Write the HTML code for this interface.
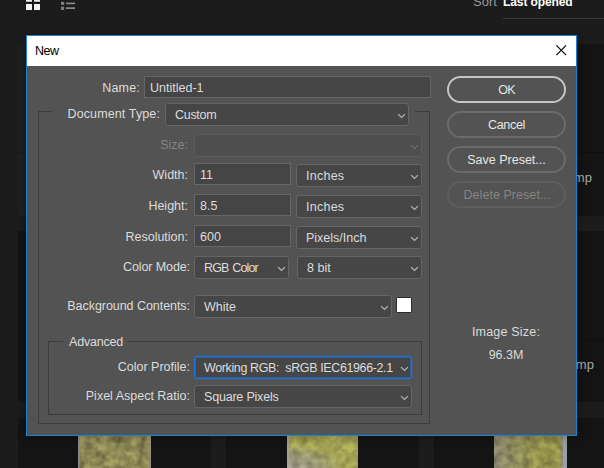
<!DOCTYPE html>
<html lang="en">
<head>
<meta charset="utf-8">
<title>New</title>
<style>
*{box-sizing:border-box;margin:0;padding:0}
html,body{width:604px;height:468px;overflow:hidden;background:#1c1c1c}
body{position:relative;font-family:"Liberation Sans",Arial,sans-serif;font-size:12.5px;color:#dcdcdc;line-height:16px}
.abs{position:absolute}
/* background app */
.card{position:absolute;background:#141414}
.card i{position:absolute;left:0;width:100%;height:1px;background:#0f0f0f}
.info{position:absolute;background:#181818}
.thumb{position:absolute;overflow:hidden}
/* dialog */
#dlg{position:absolute;left:26px;top:35px;width:551px;height:401px;border:1px solid #1883d7;background:#535353;box-shadow:0 1px 9px 1px rgba(0,0,0,.24)}
#title{position:absolute;left:0;top:0;width:549px;height:30px;background:#fff;color:#000}
#title span{position:absolute;left:8px;top:7px;font-size:12.5px;letter-spacing:-0.5px}
.lbl{position:absolute;text-align:right;white-space:nowrap;height:16px}
.inp{position:absolute;background:#454545;border:1px solid #666;height:22px;padding:3px 0 0 5px;white-space:nowrap}
.sel{position:absolute;background:#464646;border:1px solid #656565;border-radius:3px;height:23px;padding:3px 0 0 9px;white-space:nowrap}
.sel svg{position:absolute;right:2px;top:9px}
.sel.dis{background:#4e4e4e;border-color:#5d5d5d}
.btn{position:absolute;left:421px;width:119px;height:27px;border:2px solid #6b6b6b;border-radius:14px;text-align:center;padding-top:4px;font-size:12.5px;color:#e6e6e6}
.fs{position:absolute;border:1px solid #3d3d3d}
.fs b{position:absolute;font-weight:normal;background:#535353;white-space:nowrap}
</style>
</head>
<body>
<!-- background: Photoshop start workspace -->
<!-- grid / list view icons -->
<svg class="abs" style="left:26px;top:0" width="50" height="11" viewBox="0 0 50 11">
  <rect x="0" y="0" width="6" height="1.7" fill="#f4f4f4"/><rect x="8" y="0" width="6" height="1.7" fill="#f4f4f4"/>
  <rect x="0" y="4" width="6" height="6" fill="#f4f4f4"/><rect x="8" y="4" width="6" height="6" fill="#f4f4f4"/>
  <g fill="#808080"><rect x="35" y="1.9" width="3.2" height="2.9"/><rect x="35" y="6.7" width="3.2" height="3.2"/></g>
  <g fill="#8c8c8c"><rect x="40" y="2.6" width="9" height="1.6"/><rect x="40" y="7.3" width="9" height="1.7"/></g>
</svg>
<div class="abs" id="sort" style="left:473px;top:-6px;font-size:13px;color:#9a9a9a">Sort</div>
<div class="abs" id="lastop" style="left:503px;top:-6px;font-size:12px;letter-spacing:-0.1px;color:#fff;font-weight:bold;white-space:nowrap">Last opened</div>
<div class="abs" style="left:503px;top:18px;width:101px;height:1px;background:#3a3a3a"></div>

<!-- cards row 1 -->
<div class="card" style="left:18px;top:44px;width:193px;height:172px;background:#202020;border-radius:4px"><i style="top:108px;background:#1a1a1a"></i></div>
<div class="card" style="left:226px;top:44px;width:193px;height:172px"><i style="top:108px"></i></div>
<div class="card" style="left:434px;top:44px;width:193px;height:172px"><i style="top:108px"></i></div>
<!-- cards row 2 -->
<div class="card" style="left:18px;top:231px;width:193px;height:171px"><i style="top:108px"></i></div>
<div class="card" style="left:226px;top:231px;width:193px;height:171px"><i style="top:108px"></i></div>
<div class="card" style="left:434px;top:231px;width:193px;height:171px"><i style="top:108px"></i></div>
<!-- cards row 3 -->
<div class="card" style="left:18px;top:418px;width:193px;height:60px"></div>
<div class="card" style="left:226px;top:418px;width:193px;height:60px"></div>
<div class="card" style="left:434px;top:418px;width:193px;height:60px"></div>
<!-- file names peeking out -->
<div class="abs" id="mp1" style="left:563px;top:170px;font-size:13px;color:#a9a9a9;white-space:nowrap">.bmp</div>
<div class="abs" id="mp2" style="left:565px;top:357px;font-size:13px;color:#a9a9a9;white-space:nowrap">.bmp</div>
<!-- thumbnails row 3 -->
<svg class="abs" style="left:0;top:436px" width="604" height="32" viewBox="0 0 604 32">
  <defs>
    <filter id="nz" x="0" y="0" width="100%" height="100%">
      <feTurbulence type="fractalNoise" baseFrequency="0.13" numOctaves="2" seed="4" result="t"/>
      <feColorMatrix in="t" type="matrix" values="0 0 0 0 0  0 0 0 0 0  0 0 0 0 0  0.45 0.45 0 0 -0.3"/>
      <feComposite in2="SourceGraphic" operator="in"/>
    </filter>
    <radialGradient id="g2" cx="0.05" cy="1" r="0.75" gradientTransform="scale(1 1)"><stop offset="0" stop-color="#b0ad9a"/><stop offset=".45" stop-color="#aeab88"/><stop offset="1" stop-color="#b7b65f"/></radialGradient>
    <linearGradient id="g3" x1="0" y1="0" x2="1" y2="0"><stop offset="0" stop-color="#9c987c"/><stop offset=".3" stop-color="#a29e69"/><stop offset=".55" stop-color="#a9a65a"/><stop offset=".91" stop-color="#aaa756"/><stop offset=".94" stop-color="#9d9da4"/><stop offset="1" stop-color="#9d9da4"/></linearGradient>
  </defs>
  <rect x="78" y="0" width="73" height="32" fill="#a6a064"/>
  <rect x="78" y="0" width="73" height="32" fill="#777138" filter="url(#nz)"/>
  <rect x="78" y="0" width="1.5" height="32" fill="#8f8b84"/><rect x="150" y="0" width="1" height="32" fill="#8f8b84"/>
  <rect x="287" y="0" width="71" height="32" fill="url(#g2)"/>
  <rect x="287" y="0" width="71" height="32" fill="#8f8c50" filter="url(#nz)" opacity=".7"/><rect x="287" y="0" width="2" height="32" fill="#a7a493" opacity=".8"/>
  <rect x="494" y="0" width="73" height="32" fill="url(#g3)"/>
  <rect x="494" y="0" width="69" height="32" fill="#7d7a44" filter="url(#nz)" opacity=".8"/>
</svg>

<!-- dialog -->
<div id="dlg">
  <div id="title"><span id="ttxt">New</span>
    <svg class="abs" style="left:529px;top:9px" width="11" height="11" viewBox="0 0 11 11"><path d="M0.4 0.4L10.1 10.1M10.1 0.4L0.4 10.1" stroke="#000" stroke-width="1.15" fill="none"/></svg>
  </div>
</div>

<!-- dialog contents (page coordinates) -->
<div id="form" class="abs" style="left:0;top:0;width:604px;height:468px">
  <!-- fieldsets -->
  <div class="fs" style="left:38px;top:111px;width:392px;height:313px"><b style="left:13px;top:-8px;width:363px;height:16px"></b></div>
  <div class="fs" style="left:48px;top:341px;width:374px;height:74px"><b id="adv" style="left:14px;top:-8px;letter-spacing:-0.2px;padding:0 5px 0 6px;height:18px">Advanced</b></div>

  <div class="lbl" id="l_name" style="left:40px;width:100px;top:80px;letter-spacing:0.2px">Name:</div>
  <div class="inp" id="i_name" style="left:144px;top:76px;width:287px">Untitled-1</div>

  <div class="lbl" id="l_doc" style="left:40px;width:120px;top:106px;letter-spacing:0.12px">Document Type:</div>
  <div class="sel" id="s_doc" style="left:165px;top:103px;width:244px;letter-spacing:-0.3px;padding-top:3px">Custom<svg width="9" height="6" viewBox="0 0 9 6"><path d="M1.1 1.1L4.5 4.5L7.9 1.1" stroke="#b8b8b8" stroke-width="1.2" fill="none"/></svg></div>

  <div class="lbl" id="l_size" style="left:88px;width:100px;top:137px;color:#858585">Size:</div>
  <div class="sel dis" id="s_size" style="left:194px;top:134px;width:228px"><svg width="9" height="6" viewBox="0 0 9 6"><path d="M1.1 1.1L4.5 4.5L7.9 1.1" stroke="#6a6a6a" stroke-width="1.25" fill="none"/></svg></div>

  <div class="lbl" id="l_w" style="left:88px;width:100px;top:167px">Width:</div>
  <div class="inp" id="i_w" style="left:194px;top:163px;width:97px">11</div>
  <div class="sel" id="s_w" style="left:296px;top:164px;width:126px;letter-spacing:0.25px;padding-left:9px">Inches<svg width="9" height="6" viewBox="0 0 9 6"><path d="M1.1 1.1L4.5 4.5L7.9 1.1" stroke="#b8b8b8" stroke-width="1.2" fill="none"/></svg></div>

  <div class="lbl" id="l_h" style="left:88px;width:100px;top:198px">Height:</div>
  <div class="inp" id="i_h" style="left:194px;top:194px;width:97px">8.5</div>
  <div class="sel" id="s_h" style="left:296px;top:195px;width:126px;letter-spacing:0.25px;padding-left:9px">Inches<svg width="9" height="6" viewBox="0 0 9 6"><path d="M1.1 1.1L4.5 4.5L7.9 1.1" stroke="#b8b8b8" stroke-width="1.2" fill="none"/></svg></div>

  <div class="lbl" id="l_r" style="left:88px;width:100px;top:229px">Resolution:</div>
  <div class="inp" id="i_r" style="left:194px;top:225px;width:97px">600</div>
  <div class="sel" id="s_r" style="left:296px;top:226px;width:126px">Pixels/Inch<svg width="9" height="6" viewBox="0 0 9 6"><path d="M1.1 1.1L4.5 4.5L7.9 1.1" stroke="#b8b8b8" stroke-width="1.2" fill="none"/></svg></div>

  <div class="lbl" id="l_cm" style="letter-spacing:-0.1px;left:88px;width:102px;top:259px">Color Mode:</div>
  <div class="sel" id="s_cm" style="left:194px;top:256px;width:95px;letter-spacing:-0.9px;word-spacing:1.4px">RGB Color<svg width="9" height="6" viewBox="0 0 9 6"><path d="M1.1 1.1L4.5 4.5L7.9 1.1" stroke="#b8b8b8" stroke-width="1.2" fill="none"/></svg></div>
  <div class="sel" id="s_bit" style="left:297px;top:256px;width:125px;padding-left:9px">8 bit<svg width="9" height="6" viewBox="0 0 9 6"><path d="M1.1 1.1L4.5 4.5L7.9 1.1" stroke="#b8b8b8" stroke-width="1.2" fill="none"/></svg></div>

  <div class="lbl" id="l_bg" style="letter-spacing:-0.05px;left:60px;width:130px;top:298px">Background Contents:</div>
  <div class="sel" id="s_bg" style="left:194px;top:295px;width:198px">White<svg width="9" height="6" viewBox="0 0 9 6"><path d="M1.1 1.1L4.5 4.5L7.9 1.1" stroke="#b8b8b8" stroke-width="1.2" fill="none"/></svg></div>
  <div class="abs" id="sw" style="left:396px;top:297px;width:16px;height:16px;background:#fff;border:1px solid #2c2c2c;border-radius:1px"></div>

  <div class="lbl" id="l_cp" style="left:60px;width:130px;top:359px">Color Profile:</div>
  <div class="sel" id="s_cp" style="left:194px;top:356px;width:218px;height:23px;border:1px solid #1e72dc;box-shadow:inset 0 0 0 1px rgba(30,114,220,.55),0 0 0 1px rgba(30,114,220,.18);padding:3px 0 0 9px;white-space:pre;letter-spacing:-0.38px">Working RGB:  sRGB IEC61966-2.1<svg style="right:2px;top:9px" width="9" height="6" viewBox="0 0 9 6"><path d="M1.1 1.1L4.5 4.5L7.9 1.1" stroke="#b8b8b8" stroke-width="1.2" fill="none"/></svg></div>

  <div class="lbl" id="l_par" style="left:60px;width:130px;top:388px">Pixel Aspect Ratio:</div>
  <div class="sel" id="s_par" style="left:194px;top:385px;width:218px;letter-spacing:-0.2px">Square Pixels<svg width="9" height="6" viewBox="0 0 9 6"><path d="M1.1 1.1L4.5 4.5L7.9 1.1" stroke="#b8b8b8" stroke-width="1.2" fill="none"/></svg></div>

  <!-- buttons -->
  <div class="btn" id="b_ok" style="letter-spacing:-0.8px;left:447px;top:76px;border:2px solid #c6c6c6">OK</div>
  <div class="btn" id="b_ca" style="letter-spacing:-0.3px;left:447px;top:111px">Cancel</div>
  <div class="btn" id="b_sp" style="left:447px;top:146px">Save Preset...</div>
  <div class="btn" id="b_dp" style="letter-spacing:0.05px;padding-left:1px;left:447px;top:181px;color:#858585;border-color:#5d5d5d">Delete Preset...</div>

  <div class="abs" id="is1" style="left:446px;width:120px;top:324px;text-align:center;letter-spacing:0.2px">Image Size:</div>
  <div class="abs" id="is2" style="left:446px;width:120px;top:347px;text-align:center">96.3M</div>
</div>
</body>
</html>
